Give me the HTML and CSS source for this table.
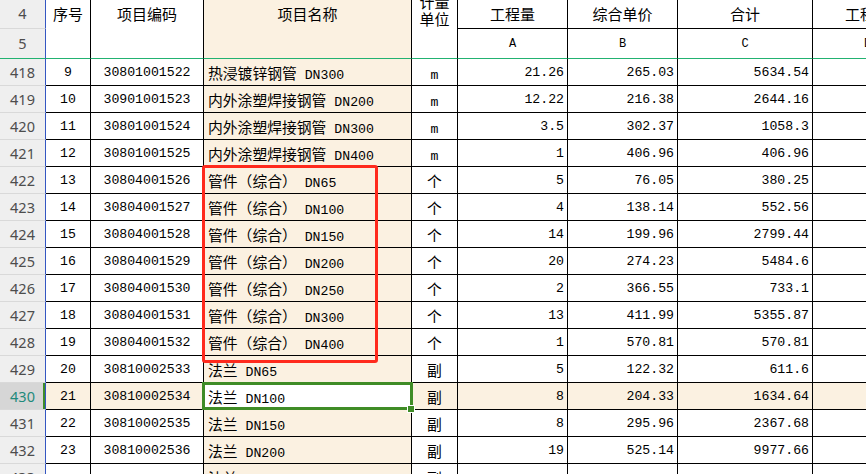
FILE: index.html
```html
<!DOCTYPE html>
<html lang="zh-CN">
<head>
<meta charset="utf-8">
<title>工程量清单</title>
<link rel="stylesheet" href="styles.css">
</head>
<body>
<div class="sheet">
  <div class="c rh">4</div>
  <div class="c hd m2">序号</div>
  <div class="c hd m2">项目编码</div>
  <div class="c hd m2 bg">项目名称</div>
  <div class="c hd m2"><div class="two">计量<br>单位</div></div>
  <div class="c hd">工程量</div>
  <div class="c hd">综合单价</div>
  <div class="c hd">合计</div>
  <div class="c hd">工程量</div>

  <div class="c rh r5">5</div>
  <div class="c r5 col">A</div>
  <div class="c r5 col">B</div>
  <div class="c r5 col">C</div>
  <div class="c r5 col">D</div>

  <div class="c rh">418</div><div class="c n ctr">9</div><div class="c n ctr">30801001522</div><div class="c nm">热浸镀锌钢管<span class="n"> DN300</span></div><div class="c u"><span class="n">m</span></div><div class="c n r">21.26</div><div class="c n r">265.03</div><div class="c n r">5634.54</div><div class="c"></div>
  <div class="c rh">419</div><div class="c n ctr">10</div><div class="c n ctr">30901001523</div><div class="c nm">内外涂塑焊接钢管<span class="n"> DN200</span></div><div class="c u"><span class="n">m</span></div><div class="c n r">12.22</div><div class="c n r">216.38</div><div class="c n r">2644.16</div><div class="c"></div>
  <div class="c rh">420</div><div class="c n ctr">11</div><div class="c n ctr">30801001524</div><div class="c nm">内外涂塑焊接钢管<span class="n"> DN300</span></div><div class="c u"><span class="n">m</span></div><div class="c n r">3.5</div><div class="c n r">302.37</div><div class="c n r">1058.3</div><div class="c"></div>
  <div class="c rh">421</div><div class="c n ctr">12</div><div class="c n ctr">30801001525</div><div class="c nm">内外涂塑焊接钢管<span class="n"> DN400</span></div><div class="c u"><span class="n">m</span></div><div class="c n r">1</div><div class="c n r">406.96</div><div class="c n r">406.96</div><div class="c"></div>
  <div class="c rh">422</div><div class="c n ctr">13</div><div class="c n ctr">30804001526</div><div class="c nm">管件（综合）<span class="n"> DN65</span></div><div class="c u">个</div><div class="c n r">5</div><div class="c n r">76.05</div><div class="c n r">380.25</div><div class="c"></div>
  <div class="c rh">423</div><div class="c n ctr">14</div><div class="c n ctr">30804001527</div><div class="c nm">管件（综合）<span class="n"> DN100</span></div><div class="c u">个</div><div class="c n r">4</div><div class="c n r">138.14</div><div class="c n r">552.56</div><div class="c"></div>
  <div class="c rh">424</div><div class="c n ctr">15</div><div class="c n ctr">30804001528</div><div class="c nm">管件（综合）<span class="n"> DN150</span></div><div class="c u">个</div><div class="c n r">14</div><div class="c n r">199.96</div><div class="c n r">2799.44</div><div class="c"></div>
  <div class="c rh">425</div><div class="c n ctr">16</div><div class="c n ctr">30804001529</div><div class="c nm">管件（综合）<span class="n"> DN200</span></div><div class="c u">个</div><div class="c n r">20</div><div class="c n r">274.23</div><div class="c n r">5484.6</div><div class="c"></div>
  <div class="c rh">426</div><div class="c n ctr">17</div><div class="c n ctr">30804001530</div><div class="c nm">管件（综合）<span class="n"> DN250</span></div><div class="c u">个</div><div class="c n r">2</div><div class="c n r">366.55</div><div class="c n r">733.1</div><div class="c"></div>
  <div class="c rh">427</div><div class="c n ctr">18</div><div class="c n ctr">30804001531</div><div class="c nm">管件（综合）<span class="n"> DN300</span></div><div class="c u">个</div><div class="c n r">13</div><div class="c n r">411.99</div><div class="c n r">5355.87</div><div class="c"></div>
  <div class="c rh">428</div><div class="c n ctr">19</div><div class="c n ctr">30804001532</div><div class="c nm">管件（综合）<span class="n"> DN400</span></div><div class="c u">个</div><div class="c n r">1</div><div class="c n r">570.81</div><div class="c n r">570.81</div><div class="c"></div>
  <div class="c rh">429</div><div class="c n ctr">20</div><div class="c n ctr">30810002533</div><div class="c nm">法兰<span class="n"> DN65</span></div><div class="c u">副</div><div class="c n r">5</div><div class="c n r">122.32</div><div class="c n r">611.6</div><div class="c"></div>
  <div class="c rh act">430</div><div class="c n ctr hl">21</div><div class="c n ctr hl">30810002534</div><div class="c nm sel">法兰<span class="n"> DN100</span><div class="selbox"></div><div class="handle"></div></div><div class="c u hl">副</div><div class="c n r hl">8</div><div class="c n r hl">204.33</div><div class="c n r hl">1634.64</div><div class="c hl"></div>
  <div class="c rh">431</div><div class="c n ctr">22</div><div class="c n ctr">30810002535</div><div class="c nm">法兰<span class="n"> DN150</span></div><div class="c u">副</div><div class="c n r">8</div><div class="c n r">295.96</div><div class="c n r">2367.68</div><div class="c"></div>
  <div class="c rh">432</div><div class="c n ctr">23</div><div class="c n ctr">30810002536</div><div class="c nm">法兰<span class="n"> DN200</span></div><div class="c u">副</div><div class="c n r">19</div><div class="c n r">525.14</div><div class="c n r">9977.66</div><div class="c"></div>
  <div class="c rh">433</div><div class="c"></div><div class="c"></div><div class="c nm">法兰</div><div class="c u">副</div><div class="c"></div><div class="c"></div><div class="c"></div><div class="c"></div>

  <div class="redbox"></div>
</div>
</body>
</html>
```
FILE: styles.css
```css
html, body {
  margin: 0;
  padding: 0;
  background: #fff;
  width: 866px;
  height: 474px;
  overflow: hidden;
}

.sheet {
  position: relative;
  display: grid;
  grid-template-columns: 46px 45px 113px 208px 46px 110px 110px 135px 110px;
  grid-template-rows: 29px 30px repeat(16, 27px);
  width: 923px;
  font-family: "Noto Sans CJK SC", sans-serif;
  color: #000;
}

.c {
  box-sizing: border-box;
  border-right: 1px solid #000;
  border-bottom: 1px solid #000;
  overflow: hidden;
  white-space: pre;
  font-size: 14.8px;
  line-height: 24px;
  padding-top: 2px;
  text-align: center;
}

.rh {
  grid-column: 1;
  background: #efefef;
  border-right: 1px solid #3456c2;
  border-bottom: 1px solid #d9d9d9;
  color: #4d4d4d;
  font-family: "Noto Sans", sans-serif;
  font-size: 14.5px;
  padding-top: 1px;
}

.rh.act {
  background: #d6d6d6;
  color: #1f8a7b;
  box-shadow: inset -2px 0 0 #3f8c2a;
}

.hd {
  font-size: 15px;
  line-height: 28px;
  padding-top: 0;
}

.m2 {
  grid-row: span 2;
  border-bottom: 1px solid #22b271;
}

.r5 {
  border-bottom: 1px solid #22b271;
}

.rh.r5 {
  border-bottom: 1px solid #22b271;
  padding-top: 2px;
}

.col {
  font-family: "Liberation Mono", monospace;
  font-size: 12px;
  line-height: 26px;
}

.two {
  font-size: 15px;
  line-height: 16.5px;
  margin-top: -6px;
}

.bg {
  background: #fbf1e1;
}

.n {
  font-family: "Liberation Mono", monospace;
  font-size: 13.2px;
}

.ctr {
  text-align: center;
}

.r {
  text-align: right;
  padding-right: 3px;
}

.nm {
  text-align: left;
  padding-left: 4px;
  background: #fbf1e1;
}

.hl {
  background: #fbf1e1;
}

.nm.sel {
  position: relative;
  overflow: visible;
  background: #fff;
  z-index: 2;
}

.selbox {
  position: absolute;
  left: -2px;
  top: -1px;
  width: 211px;
  height: 28px;
  box-sizing: border-box;
  border: 3px solid #3f8c26;
}

.handle {
  position: absolute;
  left: 204px;
  top: 23px;
  width: 6px;
  height: 6px;
  background: #3f8c26;
  outline: 1px solid #fff;
}

.redbox {
  position: absolute;
  left: 202px;
  top: 165px;
  width: 176px;
  height: 198px;
  box-sizing: border-box;
  border: 3px solid #ff2a1d;
  border-radius: 3px;
  pointer-events: none;
  z-index: 3;
}
```
